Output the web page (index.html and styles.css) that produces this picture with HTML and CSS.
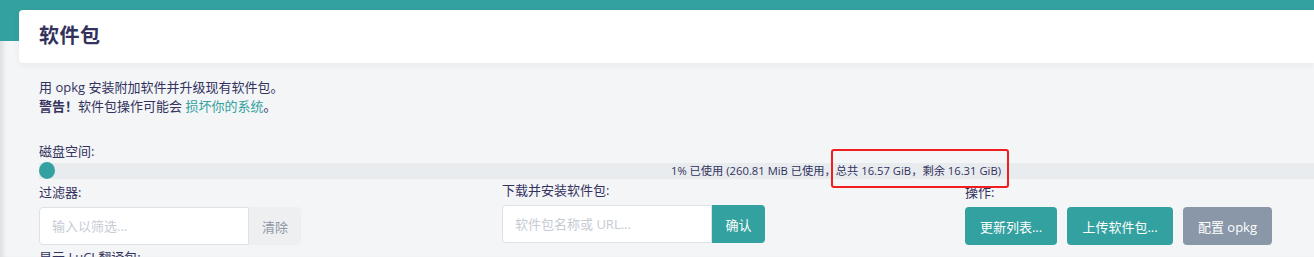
FILE: index.html
```html
<!DOCTYPE html>
<html lang="zh-CN">
<head>
<meta charset="utf-8">
<link rel="stylesheet" href="styles.css">
</head>
<body>
<div class="page">
  <div class="band"></div>
  <div class="main">
    <div class="card"><h2 class="title">软件包</h2></div>
    <div class="content">
      <p class="desc">用 opkg 安装附加软件并升级现有软件包。<br><strong>警告！</strong>软件包操作可能会 <a class="link" href="#">损坏你的系统</a>。</p>
      <div class="label disk-label">磁盘空间:</div>
      <div class="bar">
        <div class="fill"></div>
        <div class="bar-text">1% 已使用 (260.81 MiB 已使用，<span class="mark">总共 16.57 GiB，剩余 16.31 GiB)</span></div>
      </div>
      <div class="controls">
        <div class="col">
          <div class="label">过滤器:</div>
          <div class="group">
            <input class="input" type="text" placeholder="输入以筛选...">
            <button class="btn btn-clear">清除</button>
          </div>
        </div>
        <div class="col">
          <div class="label">下载并安装软件包:</div>
          <div class="group">
            <input class="input" type="text" placeholder="软件包名称或 URL...">
            <button class="btn btn-teal btn-join">确认</button>
          </div>
        </div>
        <div class="col">
          <div class="label">操作:</div>
          <div class="actions">
            <button class="btn btn-teal btn-act1">更新列表...</button>
            <button class="btn btn-teal btn-act2">上传软件包...</button>
            <button class="btn btn-gray btn-act3">配置 opkg</button>
          </div>
        </div>
      </div>
      <div class="label more">显示 LuCI 翻译包:</div>
    </div>
  </div>
</div>
</body>
</html>
```
FILE: styles.css
```css
* { box-sizing: border-box; }
html, body { margin: 0; padding: 0; }
body {
  width: 1314px;
  height: 257px;
  overflow: hidden;
  background: #f4f5f7;
  font-family: "Open Sans", "Noto Sans CJK SC", sans-serif;
  font-size: 13px;
  color: #32325d;
}
.page {
  position: relative;
  height: 257px;
  overflow: hidden;
  background: #f4f5f7;
  box-shadow: inset 6px 0 6px -4px rgba(0,0,0,0.12);
}
.band {
  position: absolute;
  left: 0; top: 0; right: 0;
  height: 41px;
  background: #33a19f;
}
.main {
  position: relative;
  padding-top: 10px;
  padding-left: 19px;
}
.card {
  height: 53px;
  background: #fff;
  border-radius: 4px 0 0 4px;
  box-shadow: 0 2px 6px rgba(50,50,93,0.06);
  display: flex;
  align-items: center;
  padding-left: 20px;
}
.title {
  margin: 0;
  font-size: 20px;
  font-weight: 700;
  color: #32325d;
  letter-spacing: 0.5px;
  line-height: 24px;
  margin-top: -1px;
}
.content {
  padding-left: 20px;
  padding-top: 15px;
}
.desc {
  margin: 0;
  line-height: 19px;
}
.desc strong { font-weight: 700; }
.link { color: #33a19f; text-decoration: none; }
.label { line-height: 19px; }
.disk-label { margin-top: 26px; }
.bar {
  position: relative;
  width: 1590px;
  height: 16px;
  margin-top: 2px;
  background: #e9ecef;
}
.fill {
  position: absolute;
  left: 0; top: -1px;
  width: 16px; height: 17px;
  border-radius: 50%;
  background: #33a19f;
}
.bar-text {
  text-align: center;
  font-size: 11.25px;
  line-height: 16px;
  color: #32325d;
  padding-left: 4px;
}
.mark { position: relative; }
.mark::after {
  content: "";
  position: absolute;
  left: -5px; right: -8px;
  top: -14px; bottom: -10px;
  border: 2px solid #f01e1e;
  border-radius: 3px;
}
.controls {
  display: grid;
  grid-template-columns: 463px 463px 463px;
  margin-top: 4px;
}
.controls .col:nth-child(2) .label { margin-top: -2px; margin-bottom: 2px; }
.group { display: flex; margin-top: 5px; }
.input {
  width: 210px;
  height: 38px;
  border: 1px solid #dee2e6;
  border-radius: 4px 0 0 4px;
  background: #fff;
  padding: 0 12px;
  font-family: inherit;
  font-size: 13px;
  color: #32325d;
  outline: none;
}
.input::placeholder { color: #c6cbd3; }
.btn {
  height: 38px;
  border: none;
  font-family: inherit;
  font-size: 13px;
  padding: 0;
  cursor: pointer;
}
.btn-clear {
  width: 52px;
  background: #eeeff1;
  color: #8d97a5;
  border-radius: 0 4px 4px 0;
}
.btn-teal { background: #33a19f; color: #fff; border-radius: 4px; }
.btn-gray { background: #8a97a8; color: #fff; border-radius: 4px; }
.btn-join { width: 53px; border-radius: 0 4px 4px 0; }
.actions { display: flex; gap: 10px; margin-top: 5px; }
.btn-act1 { width: 92px; }
.btn-act2 { width: 106px; }
.btn-act3 { width: 89px; }
.more { margin-top: 3px; }
```
